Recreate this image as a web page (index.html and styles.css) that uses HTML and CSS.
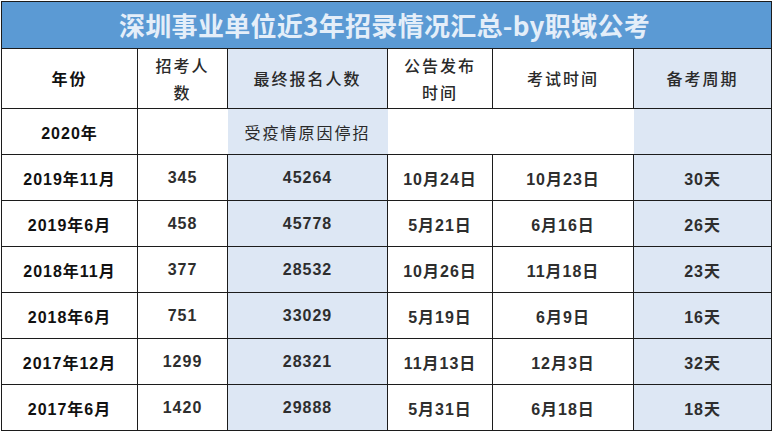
FILE: index.html
```html
<!DOCTYPE html>
<html lang="zh">
<head>
<meta charset="utf-8">
<title>深圳事业单位近3年招录情况汇总</title>
<link rel="stylesheet" href="styles.css">
</head>
<body>
<div class="wrap">
<table class="tbl">
  <colgroup>
    <col class="c1"><col class="c2"><col class="c3"><col class="c4"><col class="c5"><col class="c6">
  </colgroup>
  <tr class="title-row">
    <th colspan="6" class="title">深圳事业单位近3年招录情况汇总-by职域公考</th>
  </tr>
  <tr class="head-row">
    <th class="h bold">年份</th>
    <th class="h">招考人<br>数</th>
    <th class="h blue">最终报名人数</th>
    <th class="h">公告发布<br>时间</th>
    <th class="h">考试时间</th>
    <th class="h blue">备考周期</th>
  </tr>
  <tr class="row special">
    <td class="d first">2020年</td>
    <td class="nb"></td>
    <td class="nb blue note">受疫情原因停招</td>
    <td class="nb"></td>
    <td class="nb"></td>
    <td class="nb blue"></td>
  </tr>
  <tr class="row"><td class="d first">2019年11月</td><td class="d">345</td><td class="d blue">45264</td><td class="d">10月24日</td><td class="d">10月23日</td><td class="d blue">30天</td></tr>
  <tr class="row"><td class="d first">2019年6月</td><td class="d">458</td><td class="d blue">45778</td><td class="d">5月21日</td><td class="d">6月16日</td><td class="d blue">26天</td></tr>
  <tr class="row"><td class="d first">2018年11月</td><td class="d">377</td><td class="d blue">28532</td><td class="d">10月26日</td><td class="d">11月18日</td><td class="d blue">23天</td></tr>
  <tr class="row"><td class="d first">2018年6月</td><td class="d">751</td><td class="d blue">33029</td><td class="d">5月19日</td><td class="d">6月9日</td><td class="d blue">16天</td></tr>
  <tr class="row"><td class="d first">2017年12月</td><td class="d">1299</td><td class="d blue">28321</td><td class="d">11月13日</td><td class="d">12月3日</td><td class="d blue">32天</td></tr>
  <tr class="row"><td class="d first">2017年6月</td><td class="d">1420</td><td class="d blue">29888</td><td class="d">5月31日</td><td class="d">6月18日</td><td class="d blue">18天</td></tr>
</table>
</div>
</body>
</html>
```
FILE: styles.css
```css
html, body {
  margin: 0;
  padding: 0;
  background: #ffffff;
}
.wrap {
  padding: 1px 0 0 1px;
}
.tbl {
  border-collapse: collapse;
  table-layout: fixed;
  width: 770px;
  border: 1px solid #1c1c1c;
  font-family: "Liberation Sans", "Noto Sans CJK SC", sans-serif;
}
.c1 { width: 136px; }
.c2 { width: 90px; }
.c3 { width: 160px; }
.c4 { width: 105px; }
.c5 { width: 141px; }
.c6 { width: 138px; }

.title-row { height: 47px; }
.title {
  background: #5b9ad4;
  color: #e4eef9;
  font-family: "Noto Sans CJK SC", sans-serif;
  font-weight: 700;
  font-size: 26px;
  letter-spacing: 0.3px;
  text-align: center;
  padding: 0 4px 2px 0;
  border: 1px solid #1c1c1c;
}
.head-row { height: 60px; }
.h {
  border: 1px solid #1c1c1c;
  font-family: "Noto Sans CJK SC", sans-serif;
  font-weight: 500;
  font-size: 16px;
  letter-spacing: 2px;
  line-height: 27px;
  color: #2a2a2a;
  text-align: center;
  padding: 0;
}
.h.bold {
  font-weight: 700;
  color: #111;
}
.blue { background: #dde7f4; }

.row { height: 46px; }
.d {
  border: 1px solid #1c1c1c;
  font-weight: 700;
  font-size: 16px;
  letter-spacing: 1px;
  color: #2e2e2e;
  text-align: center;
  padding: 0;
}
.d.first { color: #111; }
.nb {
  border-top: 1px solid #1c1c1c;
  border-bottom: 1px solid #1c1c1c;
  padding: 0;
}
.note {
  font-family: "Noto Sans CJK SC", sans-serif;
  font-size: 16px;
  letter-spacing: 2px;
  color: #2a2a2a;
  text-align: center;
}
```
